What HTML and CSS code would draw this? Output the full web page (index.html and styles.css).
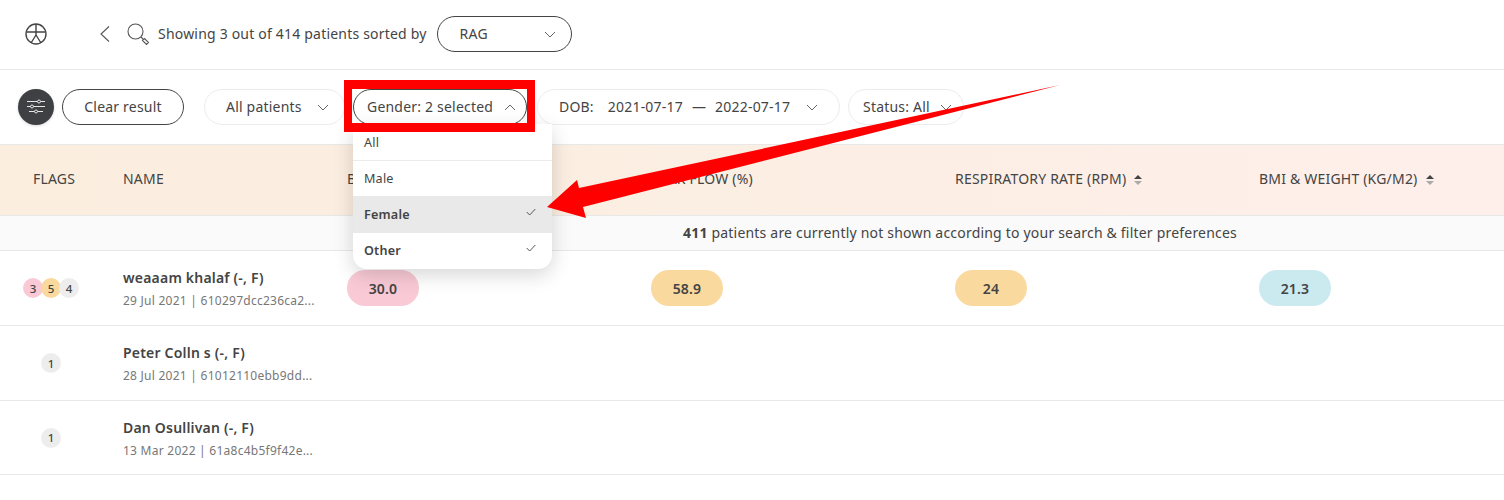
FILE: index.html
```html
<!DOCTYPE html>
<html lang="en">
<head>
<meta charset="utf-8">
<title>Patients</title>
<link rel="stylesheet" href="styles.css">
</head>
<body>
<div class="page">
  <header class="top">
    <svg class="logo" width="24" height="24" viewBox="0 0 24 24" fill="none" stroke="#444" stroke-width="1.400"><circle cx="12" cy="12" r="10"/><path d="M3 10h18M12 2v11M12 13l-5 8M12 13l5 8"/></svg>
    <svg class="back" width="12" height="18" viewBox="0 0 12 18" fill="none" stroke="#555" stroke-width="1.100"><path d="M10 1.500 2 9l8 7.500"/></svg>
    <svg class="search" width="24" height="24" viewBox="0 0 24 24" fill="none" stroke="#555" stroke-width="1.100"><circle cx="9.500" cy="9.500" r="7.500"/><path d="m15 15 2 2M16.500 18.500l2-2 4 4-2 2z"/></svg>
    <span class="showing">Showing 3 out of 414 patients sorted by</span>
    <div class="sort"><span>RAG</span><svg class="chev" width="12" height="7" viewBox="0 0 12 7"><path d="M1 1l5 5 5-5"/></svg></div>
  </header>
  <section class="filters">
    <div class="sliders">
      <svg width="20" height="16" viewBox="0 0 20 16" fill="none" stroke="#e6e6e6" stroke-width="1"><path d="M1 2.500h10.500M14.500 2.500H19M1 7.500h3.500M7.500 7.500H19M3 12.500h5.500M11.500 12.500H17"/><circle cx="13" cy="2.500" r="1.500"/><circle cx="6" cy="7.500" r="1.500"/><circle cx="10" cy="12.500" r="1.500"/></svg>
    </div>
    <button class="pill dark clear">Clear result</button>
    <div class="pill patients"><span>All patients</span><svg class="chev" width="12" height="7" viewBox="0 0 12 7"><path d="M1 1l5 5 5-5"/></svg></div>
    <div class="pill dark gender"><span>Gender: 2 selected</span><svg class="chev" width="12" height="7" viewBox="0 0 12 7"><path d="M1 6l5-5 5 5"/></svg></div>
    <div class="pill dob"><span class="dob-label">DOB:</span><span>2021-07-17</span><span class="dash">—</span><span>2022-07-17</span><svg class="chev" width="12" height="7" viewBox="0 0 12 7"><path d="M1 1l5 5 5-5"/></svg></div>
    <div class="pill status"><span>Status: All</span><svg class="chev" width="12" height="7" viewBox="0 0 12 7"><path d="M1 1l5 5 5-5"/></svg></div>
  </section>
  <section class="table">
    <div class="row head">
      <div class="flags">FLAGS</div>
      <div class="name">NAME</div>
      <div class="cell">BLOOD PRESSURE</div>
      <div class="cell">PEAK FLOW (%)</div>
      <div class="cell sorted">RESPIRATORY RATE (RPM)<span class="sort-arrows"><i class="up"></i><i class="down"></i></span></div>
      <div class="cell sorted">BMI &amp; WEIGHT (KG/M2)<span class="sort-arrows"><i class="up"></i><i class="down"></i></span></div>
    </div>
    <div class="note"><b>411</b> patients are currently not shown according to your search &amp; filter preferences</div>
    <div class="row patient">
      <div class="flags badges"><span class="badge pink">3</span><span class="badge amber">5</span><span class="badge grey">4</span></div>
      <div class="name person"><div class="who">weaaam khalaf (-, F)</div><div class="meta">29 Jul 2021 | 610297dcc236ca2...</div></div>
      <div class="cell"><span class="val pink">30.0</span></div>
      <div class="cell"><span class="val amber">58.9</span></div>
      <div class="cell"><span class="val amber">24</span></div>
      <div class="cell"><span class="val blue">21.3</span></div>
    </div>
    <div class="row patient">
      <div class="flags badges"><span class="badge grey">1</span></div>
      <div class="name person"><div class="who">Peter Colln s (-, F)</div><div class="meta">28 Jul 2021 | 61012110ebb9dd...</div></div>
    </div>
    <div class="row patient">
      <div class="flags badges"><span class="badge grey">1</span></div>
      <div class="name person"><div class="who">Dan Osullivan (-, F)</div><div class="meta">13 Mar 2022 | 61a8c4b5f9f42e...</div></div>
    </div>
  </section>
  <div class="menu">
    <div class="opt opt-all">All</div>
    <div class="opt opt-male">Male</div>
    <div class="opt on active">Female<svg class="tick" width="10" height="8" viewBox="0 0 10 8"><path d="M.7 4l3 3L9.300 1"/></svg></div>
    <div class="opt on opt-other">Other<svg class="tick" width="10" height="8" viewBox="0 0 10 8"><path d="M.7 4l3 3L9.300 1"/></svg></div>
  </div>
  <div class="redbox"></div>
  <svg class="arrow" width="1504" height="500" viewBox="0 0 1504 500"><polygon fill="#f00" points="547,207 577,180 579,188 1060,85 583,207 586,218"/></svg>
</div>
</body>
</html>
```

FILE: styles.css
```css
* { box-sizing: border-box; }
html, body { margin: 0; height: 100%; }
body { background: #fff; color: #444; font-family: "Noto Sans", sans-serif; font-size: 14px; letter-spacing: .2px; overflow: hidden; }
.page { position: relative; width: 1504px; height: 500px; overflow: hidden; }

.top { display: flex; align-items: center; height: 70px; padding: 0 0 1px 24px; border-bottom: 1px solid #e8e8e8; }
.logo { width: 24px; height: 24px; }
.back { margin-left: 51px; }
.search { margin-left: 15px; }
.showing { margin-left: 8px; margin-bottom: 2px; }
.sort { display: flex; align-items: center; justify-content: space-between; width: 135px; height: 36px; margin-left: 10px; padding: 0 15px 0 22px; border: 1px solid #444; border-radius: 18px; }
.sort span, .pill span { margin-bottom: 2px; }
.chev { fill: none; stroke: #666; stroke-width: 1; }

.filters { display: flex; align-items: center; height: 74px; padding-left: 18px; }
.sliders { display: flex; align-items: center; justify-content: center; width: 36px; height: 36px; border-radius: 50%; background: #3f4044; box-shadow: 0 1px 3px rgba(0,0,0,.15); }
.pill { display: flex; align-items: center; justify-content: space-between; height: 36px; border: 1px solid #ececec; border-radius: 18px; background: #fff; color: #444; font: inherit; letter-spacing: inherit; }
.pill.dark { border-color: #444; }
.clear { justify-content: center; width: 122px; margin-left: 8px; padding: 0 0 2px; }
.patients { width: 141px; margin-left: 20px; padding: 0 15px 0 21px; }
.gender { width: 174px; margin-left: 8px; padding: 0 10px 0 13px; }
.dob { justify-content: flex-start; width: 303px; margin-left: 10px; padding: 0 21px; }
.dob .dob-label { margin-right: 14px; }
.dob .dash { margin: 0 9px 2px; }
.dob .chev { margin-left: auto; }
.status { width: 116px; margin-left: 8px; padding: 0 11px 0 14px; }

.row { display: flex; align-items: center; }
.flags { width: 123px; flex: none; padding-left: 33px; }
.name { width: 224px; flex: none; }
.person { padding-top: 2px; }
.cell { width: 304px; flex: none; white-space: nowrap; }
.head { height: 72px; padding-bottom: 4px; border-top: 1px solid #e8e8e8; border-bottom: 1px solid #e8e8e8; background: linear-gradient(90deg, #fbeedf 0%, #fbeee2 45%, #ffefeb 100%); }
.sorted { display: flex; align-items: center; }
.sort-arrows { display: flex; flex-direction: column; gap: 2px; margin: 3px 0 0 8px; }
.sort-arrows i { width: 0; height: 0; border-left: 4px solid transparent; border-right: 4px solid transparent; }
.up { border-bottom: 4px solid #444; }
.down { border-top: 4px solid #aaa; }
.note { height: 35px; padding-left: 416px; border-bottom: 1px solid #e8e8e8; background: #fafafa; line-height: 33px; text-align: center; }
.patient { height: 75px; border-bottom: 1px solid #e8e8e8; }
.patient:last-child { height: 74px; }
.badges { display: flex; justify-content: center; padding: 0 21px 0 0; }
.badge { display: flex; align-items: center; justify-content: center; width: 20px; height: 20px; border-radius: 50%; font-size: 11.500px; font-weight: 500; letter-spacing: 0; }
.badge + .badge { margin-left: -2px; }
.pink { background: #f9cad6; }
.amber { background: #fad99f; }
.grey { background: #ededed; }
.blue { background: #cbeaf0; }
.who { font-weight: 600; line-height: 20px; }
.meta { margin-top: 4px; color: #777; font-size: 12px; letter-spacing: .25px; line-height: 18px; }
.val { display: flex; align-items: center; justify-content: center; width: 72px; height: 36px; border-radius: 18px; font-weight: 600; }

.menu { position: absolute; left: 353px; top: 124px; width: 199px; height: 145px; border-radius: 0 0 14px 14px; background: #fff; box-shadow: 0 6px 20px rgba(0,0,0,.16); font-size: 12.600px; overflow: hidden; }
.opt { display: flex; align-items: center; justify-content: space-between; height: 35px; padding: 0 16px 0 11px; }
.opt-all { align-items: flex-end; height: 37px; padding-bottom: 9px; border-bottom: 1px solid #ececec; }
.on { font-weight: 600; }
.active { height: 37px; background: #e9e9e9; }
.tick { fill: none; stroke: #555; stroke-width: 1; margin-top: -5px; }

.redbox { position: absolute; left: 344px; top: 80px; width: 191px; height: 52px; border: solid #f00; border-width: 9px 8px; }
.arrow { position: absolute; left: 0; top: 0; pointer-events: none; }
```
